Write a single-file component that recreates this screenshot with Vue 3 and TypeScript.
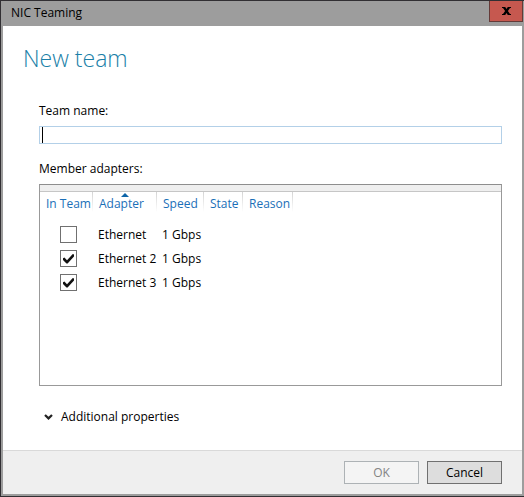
<script setup lang="ts">
import { computed, ref } from 'vue'

interface Adapter {
  id: number
  name: string
  speed: string
  state: string
  reason: string
  inTeam: boolean
}

const teamName = ref('')
const adapters = ref<Adapter[]>([
  { id: 1, name: 'Ethernet', speed: '1 Gbps', state: '', reason: '', inTeam: false },
  { id: 2, name: 'Ethernet 2', speed: '1 Gbps', state: '', reason: '', inTeam: true },
  { id: 3, name: 'Ethernet 3', speed: '1 Gbps', state: '', reason: '', inTeam: true },
])
const canSubmit = computed(() => teamName.value.trim() !== '' && adapters.value.some(a => a.inTeam))
</script>

<template>
  <div class="window">
    <header class="titlebar">
      <span class="title">NIC Teaming</span>
      <button class="close" type="button" aria-label="Close">
        <svg width="9" height="8" viewBox="0 0 9 8" aria-hidden="true">
          <path d="M0 0h3.2l1.3 2L5.8 0H9v1H8L5.9 4 8 7h1v1H5.8L4.5 6 3.2 8H0V7h1l2.1-3L1 1H0z" fill="#000" />
        </svg>
      </button>
    </header>

    <form class="dialog" @submit.prevent>
      <main class="content">
        <h1 class="heading">New team</h1>
        <div class="fields">
          <label class="label" for="team-name">Team name:</label>
          <div class="textbox">
            <input id="team-name" v-model="teamName" type="text" autocomplete="off" />
            <span v-if="!teamName" class="caret"></span>
          </div>

          <div id="members" class="label members">Member adapters:</div>
          <div class="list">
            <table aria-labelledby="members">
              <colgroup>
                <col class="c-team" />
                <col class="c-adapter" />
                <col class="c-speed" />
                <col class="c-state" />
                <col class="c-reason" />
              </colgroup>
              <thead>
                <tr>
                  <th scope="col">In Team</th>
                  <th scope="col" aria-sort="ascending">
                    Adapter
                    <svg class="sort" width="8" height="4" viewBox="0 0 8 4" aria-hidden="true">
                      <path d="M4 0l4 4H0z" fill="#0c64a8" />
                    </svg>
                  </th>
                  <th scope="col">Speed</th>
                  <th scope="col">State</th>
                  <th scope="col">Reason</th>
                </tr>
              </thead>
              <tbody>
                <tr v-for="a in adapters" :key="a.id">
                  <td class="tick">
                    <label class="check">
                      <input v-model="a.inTeam" type="checkbox" :aria-label="a.name" />
                      <svg v-if="a.inTeam" width="11" height="10" viewBox="0 0 11 10" aria-hidden="true">
                        <path d="M0 4.2L1.4 3.6 4 6.2 9.8 0 11 .6V2.6L4.6 9.6H3.5L0 6z" fill="#111" />
                      </svg>
                    </label>
                  </td>
                  <td>{{ a.name }}</td>
                  <td>{{ a.speed }}</td>
                  <td>{{ a.state }}</td>
                  <td>{{ a.reason }}</td>
                </tr>
              </tbody>
            </table>
          </div>

          <button class="expander" type="button" aria-expanded="false">
            <svg width="9" height="6" viewBox="0 0 9 6" aria-hidden="true">
              <path d="M1 1L4.5 4.4 8 1" fill="none" stroke="#222" stroke-width="2.2" />
            </svg>
            Additional properties
          </button>
        </div>
      </main>

      <footer class="footer">
        <button class="action" type="submit" :disabled="!canSubmit">OK</button>
        <button class="action" type="button">Cancel</button>
      </footer>
    </form>
  </div>
</template>

<style>
body {
  margin: 0;
}
</style>

<style scoped>
.window,
.window * {
  box-sizing: border-box;
}

.window {
  display: flex;
  flex-direction: column;
  min-height: 100vh;
  padding: 0 2px 2px;
  border: solid #312f33;
  border-width: 1px 0 1px 1px;
  background: #9d9d9d;
  color: #000;
  font: 12px/16px "Open Sans", "Noto Sans", sans-serif;
}

button,
input {
  margin: 0;
  font: inherit;
  color: inherit;
}

.titlebar {
  display: flex;
  align-items: flex-start;
  justify-content: space-between;
  height: 25px;
  padding-left: 8px;
}

.title {
  padding-top: 4px;
}

.close {
  display: flex;
  align-items: center;
  justify-content: center;
  width: 34px;
  height: 21px;
  margin-right: -1px;
  padding: 0;
  border: 1px solid #643a38;
  border-top: 0;
  background: #c6584f;
}

.dialog {
  display: flex;
  flex: 1;
  flex-direction: column;
  background: #fff;
}

.content {
  display: flex;
  flex: 1;
  flex-direction: column;
  padding: 16px 20px 25px;
}

.heading {
  margin: 0;
  color: #1b7fa8;
  font-size: 23px;
  font-weight: 300;
  line-height: 32px;
}

.fields {
  display: flex;
  flex: 1;
  flex-direction: column;
  padding: 29px 0 0 16px;
}

.label {
  line-height: 16px;
}

.textbox {
  position: relative;
  margin-top: 7px;
}

.textbox input {
  display: block;
  width: 100%;
  height: 18px;
  padding: 0 3px;
  border: 1px solid #b3d0e8;
  border-radius: 0;
  outline: 0;
  background: #fff;
}

.caret {
  position: absolute;
  top: 1px;
  left: 3px;
  width: 1px;
  height: 16px;
  background: #000;
}

.members {
  margin-top: 17px;
}

.list {
  flex: 1;
  margin-top: 7px;
  border: 1px solid #999;
  border-top-color: #8e8e8e;
  background: #fff;
}

.list::before {
  display: block;
  height: 6px;
  border-bottom: 1px solid #c6c6c6;
  background: #efefef;
  content: "";
}

table {
  width: 253px;
  border-collapse: collapse;
  border-spacing: 0;
  table-layout: fixed;
}

.c-team {
  width: 53px;
}

.c-adapter {
  width: 64px;
}

.c-speed {
  width: 47px;
}

.c-state {
  width: 39px;
}

.c-reason {
  width: 50px;
}

th,
td {
  padding: 0;
  font-weight: 400;
  text-align: left;
  white-space: nowrap;
}

th {
  position: relative;
  height: 31px;
  padding: 4px 0 0 6px;
  background: linear-gradient(#d4d4d4, #fff) right top / 1px 20px no-repeat;
  color: #1a6fb8;
  vertical-align: top;
}

.sort {
  position: absolute;
  top: 1px;
  left: 28px;
}

td {
  height: 24px;
  padding-left: 5px;
}

.tick {
  padding: 3px 0 0 20px;
  vertical-align: top;
}

.check {
  display: flex;
  position: relative;
  align-items: center;
  justify-content: center;
  width: 17px;
  height: 17px;
}

.check input {
  position: absolute;
  inset: 0;
  width: 17px;
  height: 17px;
  border: 1px solid #707070;
  background: #fff;
  appearance: none;
}

.check svg {
  position: relative;
  pointer-events: none;
}

.expander {
  display: flex;
  align-items: center;
  align-self: flex-start;
  gap: 8px;
  margin-top: 23px;
  padding: 0 0 0 5px;
  border: 0;
  background: none;
}

.footer {
  display: flex;
  justify-content: flex-end;
  gap: 8px;
  padding: 10px 20px;
  border-top: 1px solid #d9d9d9;
  background: #efefef;
}

.action {
  width: 75px;
  height: 23px;
  padding: 0;
  border: 1px solid #707070;
  background: #ddd;
}

.action:disabled {
  border-color: #adb2b5;
  background: #f4f4f4;
  color: #838383;
}
</style>
